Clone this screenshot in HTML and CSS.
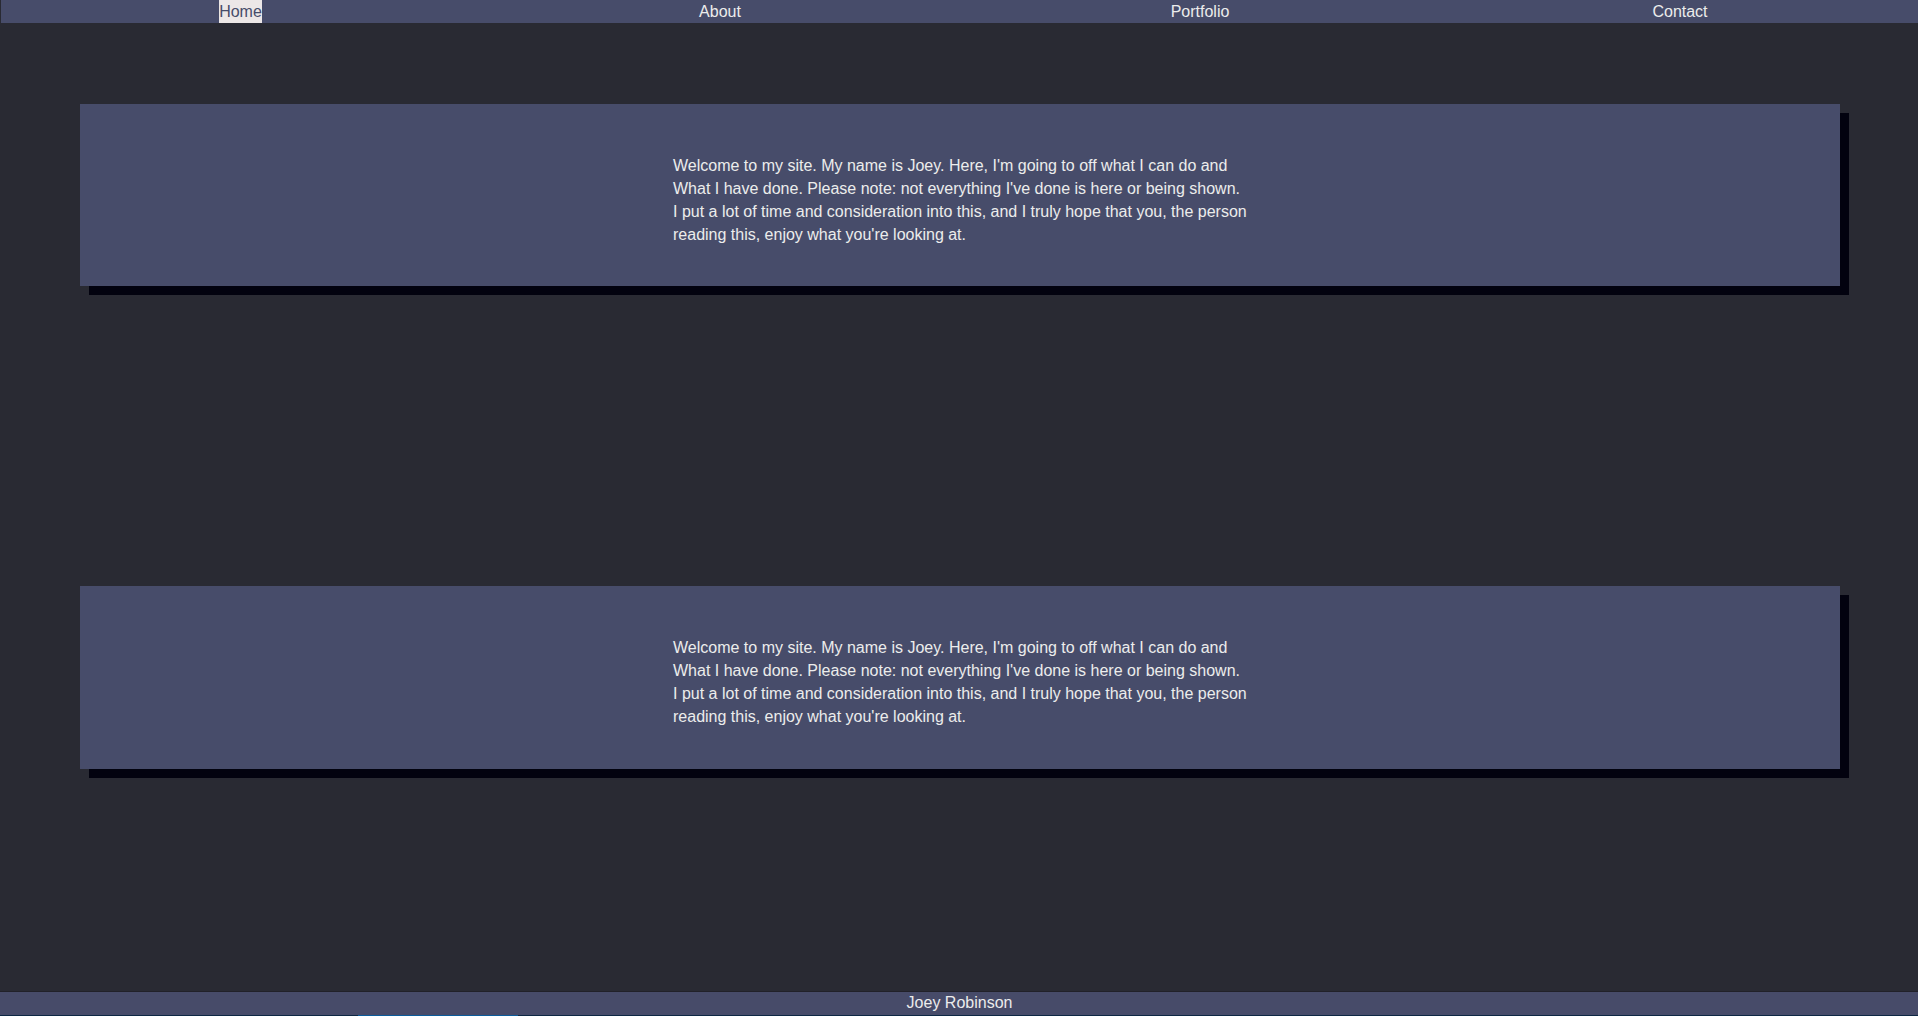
FILE: index.html
```html
<!DOCTYPE html>
<html lang="en">
<head>
<meta charset="utf-8">
<title>Joey Robinson</title>
<link rel="stylesheet" href="styles.css">
</head>
<body>
<div class="page">
  <nav class="nav">
    <div class="nav-item"><a class="nav-link active" href="#">Home</a></div>
    <div class="nav-item"><a class="nav-link" href="#">About</a></div>
    <div class="nav-item"><a class="nav-link" href="#">Portfolio</a></div>
    <div class="nav-item"><a class="nav-link" href="#">Contact</a></div>
  </nav>
  <main class="main">
    <section class="card card-first">
      <p class="card-text">Welcome to my site. My name is Joey. Here, I'm going to off what I can do and<br>What I have done. Please note: not everything I've done is here or being shown.<br>I put a lot of time and consideration into this, and I truly hope that you, the person<br>reading this, enjoy what you're looking at.</p>
    </section>
    <section class="card card-second">
      <p class="card-text">Welcome to my site. My name is Joey. Here, I'm going to off what I can do and<br>What I have done. Please note: not everything I've done is here or being shown.<br>I put a lot of time and consideration into this, and I truly hope that you, the person<br>reading this, enjoy what you're looking at.</p>
    </section>
  </main>
  <footer class="footer">
    <div class="footer-text">Joey Robinson</div>
    <div class="footer-line"></div>
  </footer>
</div>
</body>
</html>
```
FILE: styles.css
```css
html, body {
  margin: 0;
  padding: 0;
  height: 100%;
}
body {
  background: #292a33;
  font-family: "Liberation Sans", Arial, sans-serif;
  font-size: 16px;
  color: #ececec;
  overflow: hidden;
}
.page {
  display: flex;
  flex-direction: column;
  min-height: 100vh;
}
.nav {
  display: flex;
  height: 23px;
  background: #474c6a;
  border-left: 1px solid #292a33;
  overflow: hidden;
}
.nav-item {
  flex: 0 0 480px;
  text-align: center;
}
.nav-item:first-child {
  flex-basis: 479px;
}
.nav-link {
  display: inline-block;
  height: 23px;
  line-height: 23px;
  color: #ececec;
  text-decoration: none;
}
.nav-link.active {
  background: #ece7e7;
  color: #474c6a;
}
.main {
  display: flex;
  flex-direction: column;
  padding-top: 81px;
}
.card {
  width: 1760px;
  margin-left: 80px;
  background: #474c6a;
  box-shadow: 9px 9px 0 #02020f;
  box-sizing: border-box;
  padding: 50px 0 0 593px;
}
.card-first {
  height: 182px;
}
.card-second {
  height: 183px;
  margin-top: 300px;
}
.card-text {
  margin: 0;
  line-height: 23px;
  white-space: nowrap;
}
.footer {
  margin-top: auto;
  background: #474b69;
  border-top: 1px solid #212129;
}
.footer-text {
  height: 23px;
  line-height: 21px;
  padding-left: 1px;
  text-align: center;
  color: #ececec;
}
.footer-line {
  height: 1px;
  background: linear-gradient(to right, #0d2744 0, #0d2744 358px, #0b5c9c 358px, #0b5c9c 518px, #0d2744 518px);
}
```
